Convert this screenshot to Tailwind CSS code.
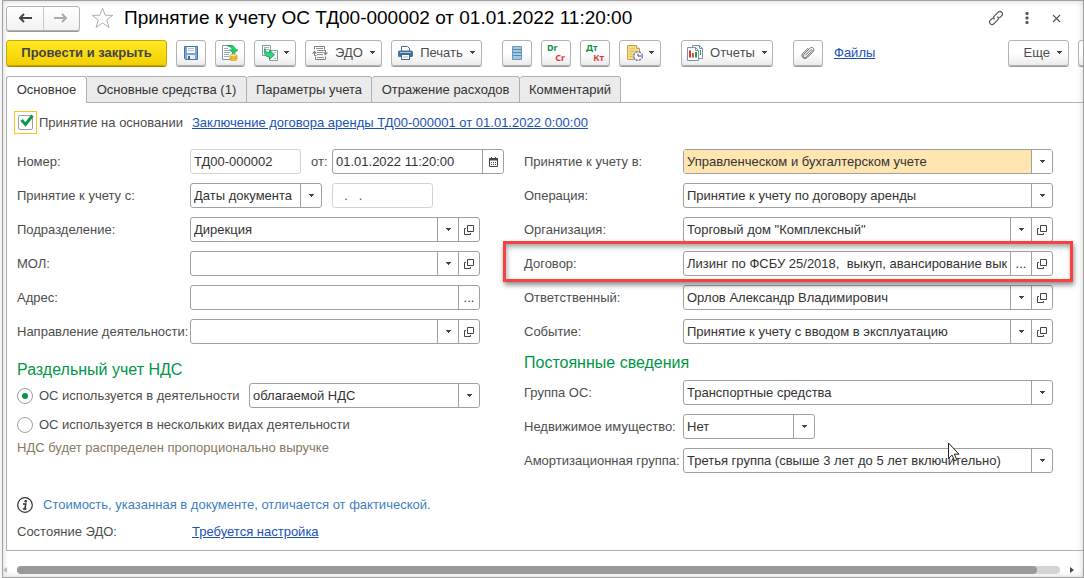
<!DOCTYPE html>
<html lang="ru">
<head>
<meta charset="utf-8">
<title>Принятие к учету ОС</title>
<script src="https://cdn.jsdelivr.net/npm/@tailwindcss/browser@4"></script>
</head>
<body class="bg-[#f5f5f5] font-['Liberation_Sans',Arial,sans-serif] text-[13px] leading-4 text-[#4d4d4d] overflow-hidden">

<svg class="hidden" aria-hidden="true">
  <symbol id="tri" viewBox="0 0 5 3"><path d="M0 0h5v1H4v1H3v1H2V2H1V1H0z" fill="#444"/></symbol>
  <symbol id="open" viewBox="0 0 10 10"><path d="M3.500.500h6v6h-6zM2 3.500H.500v6h6V8" fill="none" stroke="#444"/></symbol>
</svg>

<div class="ml-[2px] min-h-screen flex flex-col bg-white border border-[#a0a0a0] shadow-[inset_0_0_6px_rgba(0,0,0,0.18)] overflow-hidden">

  <!-- Title bar -->
  <header class="flex items-center pl-[3px] pr-[22px] pt-[4px] h-[30px]">
    <div class="flex w-[74px] h-[25px] border border-[#b3b3b3] rounded-[3px] shadow-[0_1px_0_#999] bg-linear-to-b from-white to-[#f2f2f2]">
      <button aria-label="Назад" class="flex-1 flex items-center justify-center border-r border-[#c8c8c8]">
        <svg class="w-[14px] h-[10px]" viewBox="0 0 14 10"><path d="M14 5H2M6 1L2 5l4 4" fill="none" stroke="#444" stroke-width="2"/></svg>
      </button>
      <button aria-label="Вперед" class="flex-1 flex items-center justify-center">
        <svg class="w-[14px] h-[10px]" viewBox="0 0 14 10"><path d="M0 5h12M8 1l4 4-4 4" fill="none" stroke="#aaa" stroke-width="2"/></svg>
      </button>
    </div>
    <button aria-label="В избранное" class="ml-[11px]">
      <svg class="w-[23px] h-[22px]" viewBox="0 0 23 22"><path d="M11.500 1.200l2.700 7.100h7.700l-6.200 4.600 2.300 7.600-6.500-4.600-6.500 4.600 2.300-7.600-6.200-4.600h7.700z" fill="#fff" stroke="#a8b0b8"/></svg>
    </button>
    <h1 class="ml-[10px] text-[19px] leading-6 text-black whitespace-nowrap">Принятие к учету ОС ТД00-000002 от 01.01.2022 11:20:00</h1>
    <div class="ml-auto flex items-center">
      <button aria-label="Ссылка" class="mr-[21px]">
        <svg class="size-4" viewBox="0 0 16 16"><path d="M6.500 9.500C5.200 8 5.500 6.800 6.500 5.800L10 2.300c2.500-2.500 6 1 3.600 3.500L11.200 8.200M9.500 6.500c1.300 1.500 1 2.700 0 3.700L6 13.700c-2.500 2.500-6-1-3.600-3.500L4.800 7.800" fill="none" stroke="#555" stroke-width="1.200"/></svg>
      </button>
      <button aria-label="Меню" class="mr-[23px]">
        <svg class="w-[4px] h-[12px]" viewBox="0 0 4 12" fill="#555"><rect x=".5" y="0" width="3" height="3" rx="1"/><rect x=".5" y="4.500" width="3" height="3" rx="1"/><rect x=".5" y="9" width="3" height="3" rx="1"/></svg>
      </button>
      <button aria-label="Закрыть">
        <svg class="size-[9px]" viewBox="0 0 9 9"><path d="M1 1l7 7M8 1L1 8" stroke="#555" stroke-width="1.100"/></svg>
      </button>
    </div>
  </header>

  <!-- Command bar -->
  <div class="flex items-center gap-[9px] pl-[3px] mt-2 h-[27px] whitespace-nowrap">
    <button class="w-[161px] h-[26px] shrink-0 rounded-[3px] border border-[#c9a900] shadow-[0_1px_0_#a08600] bg-linear-to-b from-[#ffe81f] to-[#f3d000] font-bold text-[#444]">Провести и закрыть</button>

    <button aria-label="Записать" class="w-[30px] h-[26px] shrink-0 flex items-center justify-center rounded-[3px] border border-[#b3b3b3] shadow-[0_1px_0_#999] bg-linear-to-b from-white via-white to-[#ebebeb]">
      <svg class="w-[14px] h-[14px]" viewBox="0 0 14 14"><path d="M.5.500h13v13h-12l-1-1z" fill="#7ba7d4" stroke="#4a739c"/><path d="M3 1h8v6H3z" fill="#fff"/><path d="M4 2.500h6M4 4.500h6" stroke="#a9bdd0"/><path d="M3 9h8v4H3z" fill="#e6edf4"/><path d="M4 10h2v3H4z" fill="#3f688f"/></svg>
    </button>
    <button aria-label="Провести" class="w-[30px] h-[26px] shrink-0 flex items-center justify-center rounded-[3px] border border-[#b3b3b3] shadow-[0_1px_0_#999] bg-linear-to-b from-white via-white to-[#ebebeb]">
      <svg class="size-4" viewBox="0 0 16 16"><path d="M.5.500h10v14H.5z" fill="#fff" stroke="#7f97ac"/><path d="M2 3.500h4M2 5.500h6M2 7.500h6M2 9.500h5M2 11.500h5" stroke="#9aacbc"/><path d="M5 .7c4.500-.8 8.300.5 8.700 4H16l-4.300 4.300-4.200-4.300h2.700C10 2.700 8 1.800 5 .7z" fill="#1fd06f" stroke="#0d9a4a" stroke-width=".6"/><path d="M8 10.500v3.700c0 2 7 2 7 0v-3.700z" fill="#f3c93f" stroke="#c7962a" stroke-width=".7"/><path d="M8 12.500c0 1.800 7 1.800 7 0" fill="none" stroke="#c7962a" stroke-width=".7"/><ellipse cx="11.500" cy="10.500" rx="3.500" ry="1.400" fill="#ffe890" stroke="#c7962a" stroke-width=".7"/></svg>
    </button>
    <button aria-label="Создать на основании" class="w-[42px] h-[26px] shrink-0 flex items-center justify-center gap-[6px] rounded-[3px] border border-[#b3b3b3] shadow-[0_1px_0_#999] bg-linear-to-b from-white via-white to-[#ebebeb]">
      <svg class="size-4" viewBox="0 0 16 16"><path d="M.5.500h8v10h-8z" fill="#fff" stroke="#8298ab"/><path d="M2 2.500h5M2 4.500h5" stroke="#a6b6c4"/><path d="M7.500 5.500h8v10h-8z" fill="#fff" stroke="#8298ab"/><path d="M12 7.500h2M12 13.500h2" stroke="#a6b6c4"/><path d="M2.800 3.500C3.500 6.500 5 7.500 7.500 7.500V5l5 4.800-5 4.700V12c-4.500-.2-6-4-4.700-8.500z" fill="#2fd47c" stroke="#0d9a4a" stroke-width=".8"/></svg>
      <svg class="w-[5px] h-[3px]"><use href="#tri"/></svg>
    </button>
    <button class="w-[77px] h-[26px] shrink-0 flex items-center justify-center gap-[7px] rounded-[3px] border border-[#b3b3b3] shadow-[0_1px_0_#999] bg-linear-to-b from-white via-white to-[#ebebeb]">
      <svg class="size-4" viewBox="0 0 16 16"><path d="M2.500 4.500v-3h10v3M3.500 11.500v3h10v-3" fill="none" stroke="#808080"/><path d="M4 3.500h7M5 5.500h6M5 7.500h6M5 9.500h6M5 12.500h7" stroke="#909090"/><path d="M2.500 6v4.500h2M13.500 10V5.500h-2" fill="none" stroke="#808080"/><path d="M0 8.500l2.500-3 2.500 3zM11 7.500h5l-2.500 3z" fill="#808080"/></svg>
      <span>ЭДО</span>
      <svg class="w-[5px] h-[3px]"><use href="#tri"/></svg>
    </button>
    <button class="w-[91px] h-[26px] shrink-0 flex items-center justify-center gap-[7px] rounded-[3px] border border-[#b3b3b3] shadow-[0_1px_0_#999] bg-linear-to-b from-white via-white to-[#ebebeb]">
      <svg class="w-[15px] h-[14px]" viewBox="0 0 15 14"><path d="M3.500 5V.500h6l2 2V5" fill="#fff" stroke="#4a6a88"/><rect y="4.500" width="15" height="6.500" rx="1.500" fill="#44739f"/><path d="M2 6.500h11" stroke="#a8c0d6"/><path d="M3.500 8.500h8v5h-8z" fill="#fff" stroke="#3e6286"/><path d="M5 11h5" stroke="#9bb0c4"/></svg>
      <span>Печать</span>
      <svg class="w-[5px] h-[3px]"><use href="#tri"/></svg>
    </button>

    <button aria-label="Список" class="ml-[11px] w-[30px] h-[26px] shrink-0 flex items-center justify-center rounded-[3px] border border-[#b3b3b3] shadow-[0_1px_0_#999] bg-linear-to-b from-white via-white to-[#ebebeb]">
      <svg class="w-[10px] h-[14px]" viewBox="0 0 10 14"><path d="M.5.500h9v13h-9z" fill="#a3c6e0" stroke="#6d95b5"/><path d="M1 3.500h8M1 6.500h8M1 9.500h8" stroke="#5d88aa"/></svg>
    </button>
    <button aria-label="Dr Cr" class="w-[30px] h-[26px] shrink-0 flex flex-col justify-center rounded-[3px] border border-[#b3b3b3] shadow-[0_1px_0_#999] bg-linear-to-b from-white via-white to-[#ebebeb] font-['Noto_Sans',sans-serif] text-[9px] leading-[10px] font-bold px-[5px]">
      <span class="self-start text-[#0b9444]">Dr</span><span class="self-end text-[#dd3a3a]">Cr</span>
    </button>
    <button aria-label="Дт Кт" class="w-[30px] h-[26px] shrink-0 flex flex-col justify-center rounded-[3px] border border-[#b3b3b3] shadow-[0_1px_0_#999] bg-linear-to-b from-white via-white to-[#ebebeb] font-['Noto_Sans',sans-serif] text-[9px] leading-[10px] font-bold px-[5px]">
      <span class="self-start text-[#0b9444]">Дт</span><span class="self-end text-[#dd3a3a]">Кт</span>
    </button>
    <button aria-label="Документы по сроку" class="w-[42px] h-[26px] shrink-0 flex items-center justify-center gap-[6px] rounded-[3px] border border-[#b3b3b3] shadow-[0_1px_0_#999] bg-linear-to-b from-white via-white to-[#ebebeb]">
      <svg class="size-4" viewBox="0 0 16 16"><path d="M.5.500h9l3 3v11H.5z" fill="#f7dd8a" stroke="#c9a24c"/><path d="M9.500.500v3h3" fill="#fff3c8" stroke="#c9a24c"/><path d="M2.500 4h5M2.500 6.500h5M2.500 9h3M2.500 11.500h3" stroke="#dbb963"/><circle cx="11" cy="11" r="4.300" fill="#fff" stroke="#4a78b0" stroke-width="1.300" stroke-dasharray="2.400 1"/><path d="M11 8.500V11" fill="none" stroke="#4a78b0" stroke-width="1.200"/><path d="M11 11h3" stroke="#e03030" stroke-width="1.200"/></svg>
      <svg class="w-[5px] h-[3px]"><use href="#tri"/></svg>
    </button>

    <button class="ml-[11px] w-[92px] h-[26px] shrink-0 flex items-center justify-center gap-[7px] rounded-[3px] border border-[#b3b3b3] shadow-[0_1px_0_#999] bg-linear-to-b from-white via-white to-[#ebebeb]">
      <svg class="size-4" viewBox="0 0 16 16"><path d="M5.500.500h7l3 3v10h-10z" fill="#fff" stroke="#7a93aa"/><path d="M12.500.500v3h3" fill="none" stroke="#7a93aa"/><path d="M13.500 5v5" stroke="#22a04e"/><path d="M.5 2.500h8l3 3v10H.5z" fill="#fff" stroke="#7a93aa"/><path d="M8.500 2.500v3h3" fill="none" stroke="#7a93aa"/><path d="M3 5.500v7" stroke="#e03030" stroke-width="2"/><path d="M6 8v4.500" stroke="#e05030" stroke-width="2"/><path d="M9 7v5.500" stroke="#22a04e" stroke-width="2"/></svg>
      <span>Отчеты</span>
      <svg class="w-[5px] h-[3px]"><use href="#tri"/></svg>
    </button>
    <button aria-label="Прикрепить" class="ml-[11px] w-[30px] h-[26px] shrink-0 flex items-center justify-center rounded-[3px] border border-[#b3b3b3] shadow-[0_1px_0_#999] bg-linear-to-b from-white via-white to-[#ebebeb]">
      <svg class="size-[14px]" viewBox="0 0 14 14"><path d="M4 9.500l5.500-5.500c1.200-1 2.300.2 1.300 1.400L5.500 10.800C3.500 12.800.8 10.300 2.800 8.300L8.500 2.500c2.800-2.700 6 .5 3.500 3.200L6.800 11C3.500 14.500-.8 11 1.800 7.500L7 2.200" fill="none" stroke="#666"/></svg>
    </button>
    <a href="#" class="ml-[2px] text-[#1b51b5] underline">Файлы</a>

    <button class="ml-auto w-[61px] h-[26px] shrink-0 flex items-center justify-end gap-[7px] pr-[6px] rounded-[3px] border border-[#b3b3b3] shadow-[0_1px_0_#999] bg-linear-to-b from-white via-white to-[#ebebeb]">
      <span>Еще</span>
      <svg class="w-[5px] h-[3px]"><use href="#tri"/></svg>
    </button>
    <button aria-label="Справка" class="-mr-[3px] w-2 h-[26px] shrink-0 rounded-l-[3px] border border-[#b3b3b3] shadow-[0_1px_0_#999] bg-linear-to-b from-white via-white to-[#ebebeb]"></button>
  </div>

  <!-- Tabs -->
  <nav role="tablist" class="flex items-end mt-[10px] pl-[3px] h-[27px] text-[#333] whitespace-nowrap">
    <button role="tab" aria-selected="true" class="h-full w-[81px] border border-b-0 border-[#b0b0b0] rounded-t-[3px]">Основное</button>
    <button role="tab" class="h-full w-[160px] border border-l-0 border-[#b0b0b0] rounded-tr-[3px] bg-[#ebebeb]">Основные средства (1)</button>
    <button role="tab" class="h-full w-[125px] border border-l-0 border-[#b0b0b0] rounded-t-[3px] bg-[#ebebeb]">Параметры учета</button>
    <button role="tab" class="h-full w-[148px] border border-l-0 border-[#b0b0b0] rounded-t-[3px] bg-[#ebebeb]">Отражение расходов</button>
    <button role="tab" class="h-full w-[101px] border border-l-0 border-[#b0b0b0] rounded-t-[3px] bg-[#ebebeb]">Комментарий</button>
    <div class="flex-1 border-b border-[#b0b0b0]"></div>
  </nav>

  <main class="ml-[3px] flex-1 border-l border-b border-[#b0b0b0] pl-[10px] pr-[30px] pt-2">
    <div class="flex items-center h-[23px] -ml-[3px]">
      <label class="flex items-center">
        <span class="relative size-[23px] border border-[#f5c71a] flex items-center justify-center">
          <input type="checkbox" checked class="appearance-none size-[15px] border border-[#a0a0a0] rounded-[2px]">
          <svg class="absolute left-[5px] top-[2px] w-[14px] h-[13px] pointer-events-none" viewBox="0 0 14 13"><path d="M1.500 6l4 4.500L12.500 1.500" fill="none" stroke="#0a9a4a" stroke-width="3"/></svg>
        </span>
        <span class="ml-[2px] w-[153px]">Принятие на основании</span>
      </label>
      <a href="#" class="text-[#1b51b5] underline">Заключение договора аренды ТД00-000001 от 01.01.2022 0:00:00</a>
    </div>

    <div class="mt-[15px] grid grid-cols-[minmax(0,487fr)_minmax(0,529fr)] gap-x-5">
      <!-- Left column -->
      <div class="flex flex-col gap-[9px]">
        <div class="flex items-center">
          <label for="num" class="w-[173px] shrink-0">Номер:</label>
          <input id="num" readonly value="ТД00-000002" class="w-[111px] shrink-0 h-[25px] pl-[3px] border border-[#d4d4d4] rounded-[3px] text-[#333]">
          <label for="date" class="w-[31px] pl-[10px] shrink-0">от:</label>
          <div class="flex flex-1 min-w-0 h-[25px] border border-[#a0a0a0] rounded-[3px]">
            <input id="date" value="01.01.2022 11:20:00" class="flex-1 min-w-0 pl-[3px] text-[#333]">
            <button aria-label="Календарь" class="w-[21px] flex items-center justify-center border-l border-[#a0a0a0]">
              <svg class="w-[9px] h-[10px]" viewBox="0 0 9 10"><path d="M.5 1.500h8v8h-8z" fill="#fff" stroke="#444"/><path d="M0 2.500h9" stroke="#444" stroke-width="2"/><path d="M2.500 0v2M6.500 0v2" stroke="#444"/><path d="M2 5.500h1m1 0h1m1 0h1M2 7.500h1m1 0h1m1 0h1" stroke="#444"/></svg>
            </button>
          </div>
        </div>

        <div class="flex items-center">
          <label for="from" class="w-[173px] shrink-0">Принятие к учету с:</label>
          <div class="relative w-[132px] h-[25px] border border-[#a0a0a0] rounded-[3px]">
            <select id="from" class="appearance-none w-full h-full pl-[3px] text-[#333]"><option>Даты документа</option></select>
            <span class="pointer-events-none absolute inset-y-0 right-0 w-[21px] border-l border-[#a0a0a0] flex items-center justify-center"><svg class="w-[5px] h-[3px]"><use href="#tri"/></svg></span>
          </div>
          <input aria-label="Дата принятия" readonly value="  .   ." class="ml-[10px] w-[101px] h-[25px] pl-[4px] border border-[#d4d4d4] rounded-[3px] whitespace-pre">
        </div>

        <div class="flex items-center mr-6">
          <label for="dep" class="w-[173px] shrink-0">Подразделение:</label>
          <div class="flex flex-1 h-[25px] border border-[#a0a0a0] rounded-[3px]">
            <input id="dep" value="Дирекция" class="flex-1 min-w-0 pl-[3px] text-[#333]">
            <button aria-label="Выбрать" class="w-[21px] flex items-center justify-center border-l border-[#a0a0a0]"><svg class="w-[5px] h-[3px]"><use href="#tri"/></svg></button>
            <button aria-label="Открыть" class="w-[21px] flex items-center justify-center border-l border-[#a0a0a0]"><svg class="size-[10px]"><use href="#open"/></svg></button>
          </div>
        </div>

        <div class="flex items-center mr-6">
          <label for="mol" class="w-[173px] shrink-0">МОЛ:</label>
          <div class="flex flex-1 h-[25px] border border-[#a0a0a0] rounded-[3px]">
            <input id="mol" class="flex-1 min-w-0 pl-[3px] text-[#333]">
            <button aria-label="Выбрать" class="w-[21px] flex items-center justify-center border-l border-[#a0a0a0]"><svg class="w-[5px] h-[3px]"><use href="#tri"/></svg></button>
            <button aria-label="Открыть" class="w-[21px] flex items-center justify-center border-l border-[#a0a0a0]"><svg class="size-[10px]"><use href="#open"/></svg></button>
          </div>
        </div>

        <div class="flex items-center mr-6">
          <label for="addr" class="w-[173px] shrink-0">Адрес:</label>
          <div class="flex flex-1 h-[25px] border border-[#a0a0a0] rounded-[3px]">
            <input id="addr" class="flex-1 min-w-0 pl-[3px] text-[#333]">
            <button aria-label="Выбрать" class="w-[21px] flex items-center justify-center border-l border-[#a0a0a0] text-[#333]">...</button>
          </div>
        </div>

        <div class="flex items-center mr-6">
          <label for="dir" class="w-[173px] shrink-0 whitespace-nowrap">Направление деятельности:</label>
          <div class="flex flex-1 h-[25px] border border-[#a0a0a0] rounded-[3px]">
            <input id="dir" class="flex-1 min-w-0 pl-[3px] text-[#333]">
            <button aria-label="Выбрать" class="w-[21px] flex items-center justify-center border-l border-[#a0a0a0]"><svg class="w-[5px] h-[3px]"><use href="#tri"/></svg></button>
            <button aria-label="Открыть" class="w-[21px] flex items-center justify-center border-l border-[#a0a0a0]"><svg class="size-[10px]"><use href="#open"/></svg></button>
          </div>
        </div>

        <fieldset class="mt-[7px]">
          <legend class="text-[16px] leading-5 text-[#009646]">Раздельный учет НДС</legend>
          <div class="flex items-center mt-[3px] mr-6">
            <label class="flex items-center w-[232px] shrink-0 whitespace-nowrap">
              <input type="radio" name="vat" checked class="appearance-none size-4 mr-[6px] rounded-full border border-[#a0a0a0] grid place-items-center checked:before:content-[''] checked:before:size-[6px] checked:before:rounded-full checked:before:bg-[#0b9444]">
              ОС используется в деятельности
            </label>
            <div class="relative flex-1 h-[25px] border border-[#a0a0a0] rounded-[3px]">
              <select aria-label="Вид деятельности" class="appearance-none w-full h-full pl-[3px] text-[#333]"><option>облагаемой НДС</option></select>
              <span class="pointer-events-none absolute inset-y-0 right-0 w-[21px] border-l border-[#a0a0a0] flex items-center justify-center"><svg class="w-[5px] h-[3px]"><use href="#tri"/></svg></span>
            </div>
          </div>
          <label class="flex items-center mt-[9px] whitespace-nowrap">
            <input type="radio" name="vat" class="appearance-none size-4 mr-[6px] rounded-full border border-[#a0a0a0] grid place-items-center checked:before:content-[''] checked:before:size-[6px] checked:before:rounded-full checked:before:bg-[#0b9444]">
            ОС используется в нескольких видах деятельности
          </label>
          <p class="mt-[7px] text-[#857a5f]">НДС будет распределен пропорционально выручке</p>
        </fieldset>
      </div>

      <!-- Right column -->
      <div class="flex flex-col gap-[9px]">
        <div class="flex items-center">
          <label for="acc" class="w-[159px] shrink-0">Принятие к учету в:</label>
          <div class="relative flex-1 h-[25px] border border-[#a0a0a0] rounded-[3px]">
            <select id="acc" class="appearance-none w-full h-full pl-[3px] bg-[#ffe5b0] text-[#333]"><option>Управленческом и бухгалтерском учете</option></select>
            <span class="pointer-events-none absolute inset-y-0 right-0 w-[21px] bg-white border-l border-[#a0a0a0] rounded-r-[3px] flex items-center justify-center"><svg class="w-[5px] h-[3px]"><use href="#tri"/></svg></span>
          </div>
        </div>

        <div class="flex items-center">
          <label for="op" class="w-[159px] shrink-0">Операция:</label>
          <div class="relative flex-1 h-[25px] border border-[#a0a0a0] rounded-[3px]">
            <select id="op" class="appearance-none w-full h-full pl-[3px] text-[#333]"><option>Принятие к учету по договору аренды</option></select>
            <span class="pointer-events-none absolute inset-y-0 right-0 w-[21px] border-l border-[#a0a0a0] flex items-center justify-center"><svg class="w-[5px] h-[3px]"><use href="#tri"/></svg></span>
          </div>
        </div>

        <div class="flex items-center">
          <label for="org" class="w-[159px] shrink-0">Организация:</label>
          <div class="flex flex-1 h-[25px] border border-[#a0a0a0] rounded-[3px]">
            <input id="org" value="Торговый дом &quot;Комплексный&quot;" class="flex-1 min-w-0 pl-[3px] text-[#333]">
            <button aria-label="Выбрать" class="w-[21px] flex items-center justify-center border-l border-[#a0a0a0]"><svg class="w-[5px] h-[3px]"><use href="#tri"/></svg></button>
            <button aria-label="Открыть" class="w-[21px] flex items-center justify-center border-l border-[#a0a0a0]"><svg class="size-[10px]"><use href="#open"/></svg></button>
          </div>
        </div>

        <div class="relative flex items-center">
          <label for="contract" class="w-[159px] shrink-0">Договор:</label>
          <div class="flex flex-1 h-[25px] border border-[#a0a0a0] rounded-[3px]">
            <input id="contract" value="Лизинг по ФСБУ 25/2018,  выкуп, авансирование выкупной стоимости" class="flex-1 min-w-0 ml-[3px] mr-[3px] text-[#333]">
            <button aria-label="Выбрать" class="w-[21px] flex items-center justify-center border-l border-[#a0a0a0] text-[#333]">...</button>
            <button aria-label="Открыть" class="w-[21px] flex items-center justify-center border-l border-[#a0a0a0]"><svg class="size-[10px]"><use href="#open"/></svg></button>
          </div>
          <!-- Highlight frame -->
          <div class="pointer-events-none absolute -left-[21px] -right-5 -top-[10px] -bottom-[6px] z-10 border-3 border-[#fa4141] shadow-[1px_3px_5px_rgba(0,0,0,0.45),inset_1px_3px_5px_rgba(0,0,0,0.35)]"></div>
        </div>

        <div class="flex items-center">
          <label for="resp" class="w-[159px] shrink-0">Ответственный:</label>
          <div class="flex flex-1 h-[25px] border border-[#a0a0a0] rounded-[3px]">
            <input id="resp" value="Орлов Александр Владимирович" class="flex-1 min-w-0 pl-[3px] text-[#333]">
            <button aria-label="Выбрать" class="w-[21px] flex items-center justify-center border-l border-[#a0a0a0]"><svg class="w-[5px] h-[3px]"><use href="#tri"/></svg></button>
            <button aria-label="Открыть" class="w-[21px] flex items-center justify-center border-l border-[#a0a0a0]"><svg class="size-[10px]"><use href="#open"/></svg></button>
          </div>
        </div>

        <div class="flex items-center">
          <label for="event" class="w-[159px] shrink-0">Событие:</label>
          <div class="flex flex-1 h-[25px] border border-[#a0a0a0] rounded-[3px]">
            <input id="event" value="Принятие к учету с вводом в эксплуатацию" class="flex-1 min-w-0 pl-[3px] text-[#333]">
            <button aria-label="Выбрать" class="w-[21px] flex items-center justify-center border-l border-[#a0a0a0]"><svg class="w-[5px] h-[3px]"><use href="#tri"/></svg></button>
            <button aria-label="Открыть" class="w-[21px] flex items-center justify-center border-l border-[#a0a0a0]"><svg class="size-[10px]"><use href="#open"/></svg></button>
          </div>
        </div>

        <h2 class="text-[16px] leading-5 -mb-[2px] text-[#009646]">Постоянные сведения</h2>

        <div class="flex items-center">
          <label for="group" class="w-[159px] shrink-0">Группа ОС:</label>
          <div class="relative flex-1 h-[25px] border border-[#a0a0a0] rounded-[3px]">
            <select id="group" class="appearance-none w-full h-full pl-[3px] text-[#333]"><option>Транспортные средства</option></select>
            <span class="pointer-events-none absolute inset-y-0 right-0 w-[21px] border-l border-[#a0a0a0] flex items-center justify-center"><svg class="w-[5px] h-[3px]"><use href="#tri"/></svg></span>
          </div>
        </div>

        <div class="flex items-center">
          <label for="realty" class="w-[159px] shrink-0 whitespace-nowrap">Недвижимое имущество:</label>
          <div class="relative w-[132px] h-[25px] border border-[#a0a0a0] rounded-[3px]">
            <select id="realty" class="appearance-none w-full h-full pl-[3px] text-[#333]"><option>Нет</option></select>
            <span class="pointer-events-none absolute inset-y-0 right-0 w-[21px] border-l border-[#a0a0a0] flex items-center justify-center"><svg class="w-[5px] h-[3px]"><use href="#tri"/></svg></span>
          </div>
        </div>

        <div class="relative flex items-center">
          <label for="amort" class="w-[159px] shrink-0 whitespace-nowrap">Амортизационная группа:</label>
          <div class="relative flex-1 h-[25px] border border-[#a0a0a0] rounded-[3px]">
            <select id="amort" class="appearance-none w-full h-full pl-[3px] text-[#333]"><option>Третья группа (свыше 3 лет до 5 лет включительно)</option></select>
            <span class="pointer-events-none absolute inset-y-0 right-0 w-[21px] border-l border-[#a0a0a0] flex items-center justify-center"><svg class="w-[5px] h-[3px]"><use href="#tri"/></svg></span>
          </div>
          <!-- Mouse pointer -->
          <svg class="pointer-events-none absolute right-[93px] -top-[6px] w-3 h-[20px]" viewBox="0 0 12 20"><path d="M.5 1v15.500l3.600-3.400 2.500 5.700 2.300-1-2.500-5.600H11z" fill="#fff" stroke="#222"/></svg>
        </div>
      </div>
    </div>

    <div class="mt-6 flex items-center h-4 text-[#3f7fbf]">
      <svg class="size-4 mr-[10px]" viewBox="0 0 16 16"><circle cx="8" cy="8" r="7.300" fill="#fff" stroke="#333" stroke-width="1.200"/><circle cx="8.700" cy="4.200" r="1.300" fill="#333"/><path d="M6 7h2.800l-1 5h1.700M5.800 12h2" fill="none" stroke="#333" stroke-width="1.500"/></svg>
      Стоимость, указанная в документе, отличается от фактической.
    </div>
    <div class="mt-[11px] flex items-center h-4">
      <span class="w-[175px]">Состояние ЭДО:</span>
      <a href="#" class="text-[#1b51b5] underline">Требуется настройка</a>
    </div>
  </main>

  <!-- Horizontal scroll bar -->
  <div class="flex items-center h-[26px] pt-[12px]">
    <svg class="w-[4px] h-[6px]" viewBox="0 0 4 6"><path d="M4 0v6L0 3z" fill="#b8b8b8"/></svg>
    <div class="mx-[10px] flex-1 h-2 rounded-full bg-[#d4d4d4]"><div class="h-full rounded-full bg-[#999]" style="width:97.800%"></div></div>
    <svg class="mr-[9px] w-[4px] h-[6px]" viewBox="0 0 4 6"><path d="M0 0v6l4-3z" fill="#444"/></svg>
  </div>
</div>
</body>
</html>
